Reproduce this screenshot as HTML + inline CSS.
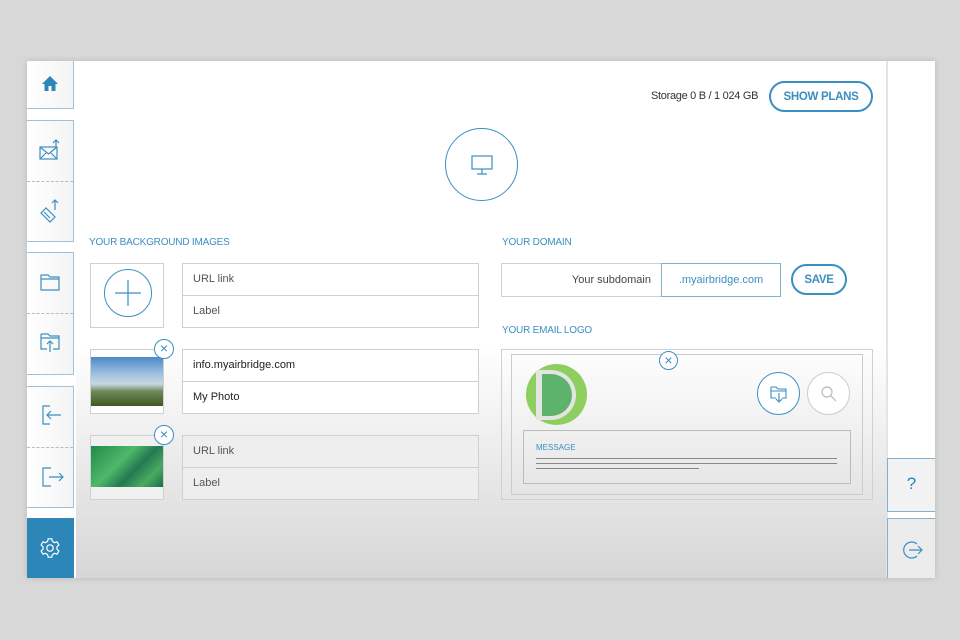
<!DOCTYPE html>
<html><head><meta charset="utf-8"><style>
*{box-sizing:border-box;margin:0;padding:0}
body{width:960px;height:640px;background:#d8d8d8;position:relative;overflow:hidden;font-family:"Liberation Sans",sans-serif}
.a{position:absolute}
.win{left:27px;top:61px;width:908px;height:517px;background:#fff;box-shadow:0 0 6px rgba(0,0,0,.15)}
.main{left:76px;top:61px;width:810px;height:517px;background:linear-gradient(#fff 0%,#fff 55%,#d6d6d6 100%)}
.sb{left:27px;width:47px;background:linear-gradient(90deg,#fff,#f4f4f4);border-right:1px solid #9cc3dc;border-top:1px solid #9cc3dc;border-bottom:1px solid #9cc3dc}
.dash{border-top:1px dashed #bbb;position:absolute;left:0;right:0}
.lbl{font-size:10px;color:#3a8fc2;letter-spacing:-.2px}
.inp{border:1px solid #d0d0d0;background:#fff}
.inp div{height:50%;border-bottom:1px solid #d0d0d0;font-size:11px;color:#555;padding-left:10px;display:flex;align-items:center}
.inp div:last-child{border-bottom:none}
.x{width:20px;height:20px;border:1px solid #3a8fc2;border-radius:50%;background:#fff;color:#3a8fc2;font-size:14px;line-height:17px;text-align:center}
.btn{border:2px solid #3a8fc2;border-radius:16px;color:#3a8fc2;font-weight:bold;font-size:11.5px;letter-spacing:-.3px;display:flex;align-items:center;justify-content:center}
svg{position:absolute}
</style></head><body>
<div class="a win"></div>
<div class="a main"></div>
<div class="a sb" style="top:61px;height:48px;border-top:none"></div>
<svg style="left:41px;top:75px" width="18" height="18" viewBox="0 0 18 18"><path d="M9 1L1 9h2.5v7h4v-5h3v5h4V9H17z" fill="#2d86b8"/></svg>
<div class="a sb" style="top:120px;height:122px"><div class="dash" style="top:60px"></div></div>
<svg style="left:38px;top:138px" width="24" height="24" viewBox="0 0 24 24" fill="none" stroke="#3a8fc2" stroke-width="1.2"><rect x="2" y="9" width="17" height="12"/><path d="M2 9l8.5 7 8.5-7M2 21l6-6M19 21l-6-6M18 10V2M15 5l3-3 3 3"/></svg>
<svg style="left:38px;top:198px" width="24" height="26" viewBox="0 0 24 26" fill="none" stroke="#3a8fc2" stroke-width="1.2"><path d="M3 15l5-5 9 9-5 5zM6 14l6 6M9 11l6 6M17 12V2M14 5l3-3 3 3"/></svg>
<div class="a sb" style="top:252px;height:123px"><div class="dash" style="top:60px"></div></div>
<svg style="left:39px;top:272px" width="22" height="20" viewBox="0 0 22 20" fill="none" stroke="#3a8fc2" stroke-width="1.2"><path d="M2 3h7l2 2h9v13H2zM2 7h18"/></svg>
<svg style="left:39px;top:330px" width="22" height="24" viewBox="0 0 22 24" fill="none" stroke="#3a8fc2" stroke-width="1.2"><path d="M2 4h7l2 2h9v13h-6M8 19H2V4M2 8h18M11 22V11M8 14l3-3 3 3"/></svg>
<div class="a sb" style="top:386px;height:122px"><div class="dash" style="top:60px"></div></div>
<svg style="left:40px;top:403px" width="22" height="24" viewBox="0 0 22 24" fill="none" stroke="#3a8fc2" stroke-width="1.2"><path d="M10 3H3v18h7M21 12H7M11 8l-4 4 4 4"/></svg>
<svg style="left:40px;top:465px" width="24" height="24" viewBox="0 0 24 24" fill="none" stroke="#3a8fc2" stroke-width="1.2"><path d="M11 3H3v18h8M9 12h14M19 8l4 4-4 4"/></svg>
<div class="a" style="left:27px;top:518px;width:47px;height:60px;background:#2d86b8"></div>
<svg style="left:39px;top:537px" width="22" height="22" viewBox="0 0 24 24" fill="none" stroke="#fff" stroke-width="1.3"><circle cx="12" cy="12" r="3.5"/><path d="M10 2h4l.6 2.8 2.4 1.4 2.7-.9 2 3.4-2.1 1.9v2.8l2.1 1.9-2 3.4-2.7-.9-2.4 1.4L14 22h-4l-.6-2.8-2.4-1.4-2.7.9-2-3.4 2.1-1.9v-2.8L2.3 8.7l2-3.4 2.7.9 2.4-1.4z"/></svg>
<div class="a" style="left:886px;top:61px;width:2px;height:517px;background:#e4e4e4"></div>
<div class="a" style="left:887px;top:458px;width:48px;height:54px;border:1px solid #7fb2d3;border-right:none;background:#f2f2f2;color:#2d86b8;font-size:17px;text-align:center;line-height:50px">?</div>
<div class="a" style="left:887px;top:518px;width:48px;height:60px;border-left:1px solid #7fb2d3;border-top:1px solid #7fb2d3;background:#ececec"></div>
<svg style="left:901px;top:539px" width="22" height="22" viewBox="0 0 22 22" fill="none" stroke="#3a8fc2" stroke-width="1.2"><path d="M16 5A8 8 0 1 0 16 17M8 11h13M17 7l4 4-4 4"/></svg>
<div class="a" style="left:651px;top:90px;font-size:11px;color:#333;letter-spacing:-.3px">Storage 0 B / 1 024 GB</div>
<div class="a btn" style="left:769px;top:81px;width:104px;height:31px">SHOW PLANS</div>
<div class="a" style="left:445px;top:128px;width:73px;height:73px;border:1px solid #3a8fc2;border-radius:50%"></div>
<svg style="left:470px;top:154px" width="24" height="22" viewBox="0 0 24 22" fill="none" stroke="#3a8fc2" stroke-width="1.2"><rect x="2" y="2" width="20" height="13"/><path d="M12 15v5M7 20h10"/></svg>
<div class="a lbl" style="left:89px;top:237px">YOUR BACKGROUND IMAGES</div>
<div class="a inp" style="left:90px;top:263px;width:74px;height:65px"></div>
<div class="a" style="left:104px;top:269px;width:48px;height:48px;border:1px solid #3a8fc2;border-radius:50%"></div>
<svg style="left:104px;top:269px" width="48" height="48"><path d="M24 11v26M11 24h26" stroke="#3a8fc2" stroke-width="1.2"/></svg>
<div class="a inp" style="left:182px;top:263px;width:297px;height:65px"><div>URL link</div><div>Label</div></div>
<div class="a inp" style="left:90px;top:349px;width:74px;height:65px"></div>
<div class="a" style="left:91px;top:357px;width:72px;height:49px;background:linear-gradient(#4a89c8 0%,#9fc2df 35%,#c9d7e0 55%,#6f8a5a 70%,#3f5a22 100%)"></div>
<div class="a inp" style="left:182px;top:349px;width:297px;height:65px"><div style="color:#222">info.myairbridge.com</div><div style="color:#222">My Photo</div></div>
<div class="a x" style="left:154px;top:339px">×</div>
<div class="a inp" style="left:90px;top:435px;width:74px;height:65px;background:#f0f0f0"></div>
<div class="a" style="left:91px;top:446px;width:72px;height:41px;background:linear-gradient(135deg,#1f8a4a,#4fb86a 40%,#237a50 60%,#48aa62 80%,#1c6e45)"></div>
<div class="a inp" style="left:182px;top:435px;width:297px;height:65px;background:#eee"><div>URL link</div><div>Label</div></div>
<div class="a x" style="left:154px;top:425px">×</div>
<div class="a lbl" style="left:502px;top:237px">YOUR DOMAIN</div>
<div class="a" style="left:501px;top:263px;width:161px;height:34px;border:1px solid #d0d0d0;font-size:11px;color:#444;text-align:right;padding-right:10px;line-height:32px">Your subdomain</div>
<div class="a" style="left:661px;top:263px;width:120px;height:34px;border:1px solid #7fb2d3;font-size:11px;color:#3a8fc2;text-align:center;line-height:32px">.myairbridge.com</div>
<div class="a btn" style="left:791px;top:264px;width:56px;height:31px">SAVE</div>
<div class="a lbl" style="left:502px;top:325px">YOUR EMAIL LOGO</div>
<div class="a" style="left:501px;top:349px;width:372px;height:151px;border:1px solid #d0d0d0"></div>
<div class="a" style="left:511px;top:354px;width:352px;height:141px;border:1px solid #ccc"></div>
<div class="a" style="left:526px;top:364px;width:61px;height:61px;border-radius:50%;background:#8ccf5e"></div>
<div class="a" style="left:536px;top:370px;width:40px;height:50px;background:#5db36b;border-radius:0 30px 30px 0;border:4px solid #e4e4e4;border-left-width:6px"></div>
<div class="a x" style="left:659px;top:351px;width:19px;height:19px">×</div>
<div class="a" style="left:757px;top:372px;width:43px;height:43px;border:1px solid #3a8fc2;border-radius:50%;background:#fff"></div>
<svg style="left:768px;top:383px" width="22" height="22" viewBox="0 0 22 22" fill="none" stroke="#3a8fc2" stroke-width="1.1"><path d="M3 4h5l2 2h8v9h-4M8 15H3V4M3 8h15M11 10v9M8 16l3 3 3-3"/></svg>
<div class="a" style="left:807px;top:372px;width:43px;height:43px;border:1px solid #ccc;border-radius:50%;background:#fff"></div>
<svg style="left:818px;top:383px" width="22" height="22" viewBox="0 0 22 22" fill="none" stroke="#bbb" stroke-width="1.2"><circle cx="9" cy="9" r="5"/><path d="M13 13l5 5"/></svg>
<div class="a" style="left:523px;top:430px;width:328px;height:54px;border:1px solid #bbb"></div>
<div class="a" style="left:536px;top:443px;font-size:8px;color:#3a8fc2">MESSAGE</div>
<div class="a" style="left:536px;top:458px;width:301px;height:1px;background:#888"></div>
<div class="a" style="left:536px;top:463px;width:301px;height:1px;background:#888"></div>
<div class="a" style="left:536px;top:468px;width:163px;height:1px;background:#888"></div>
</body></html>
